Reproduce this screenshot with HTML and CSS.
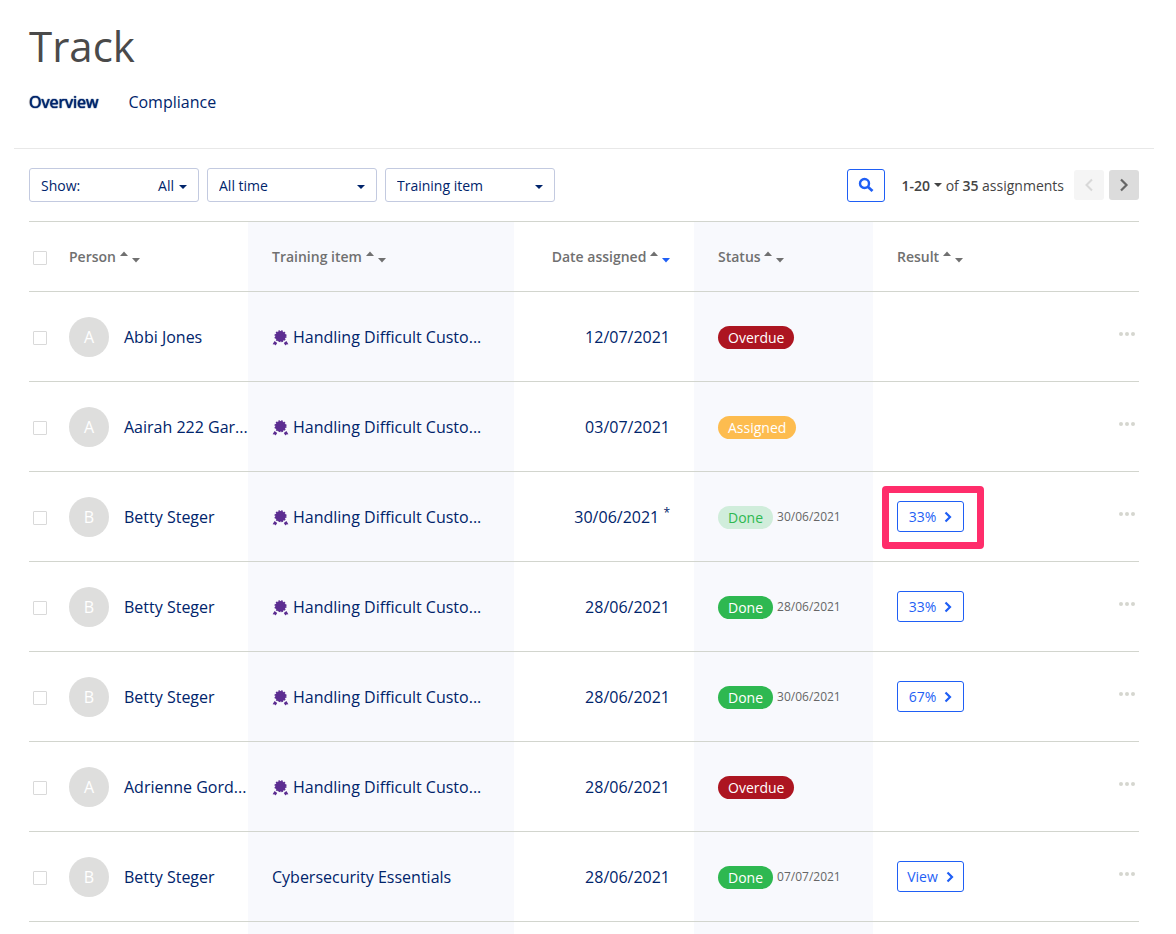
FILE: index.html
```html
<!DOCTYPE html>
<html lang="en">
<head>
  <meta charset="UTF-8" />
  <meta name="viewport" content="width=device-width, initial-scale=1.0"/>
  <title>Track</title>
  <link rel="stylesheet" href="styles.css">
</head>
<body>
  <svg class="sprite" aria-hidden="true">
    <symbol id="sort" viewBox="0 0 20 12">
      <path class="up" d="M0 5 L4 0.500 L8 5 Z"/>
      <path class="down" d="M12 7 L20 7 L16 11.500 Z"/>
    </symbol>
    <symbol id="badge" viewBox="0 0 17 16">
      <circle cx="8.500" cy="6.200" r="5.200"/>
      <circle cx="8.500" cy="6.200" r="5.300" fill="none" stroke="currentColor" stroke-width="1.500" stroke-dasharray="1.700 1.075"/>
      <path d="M2.600 11 L5.200 13 L3.600 15.600 L2.700 14.400 L0.600 14.200 Z"/>
      <path d="M14.400 11 L11.800 13 L13.400 15.600 L14.300 14.400 L16.400 14.200 Z"/>
    </symbol>
    <symbol id="chevron" viewBox="0 0 8 12">
      <path d="M1.500 1.500 L6 6 L1.500 10.500" fill="none" stroke="currentColor" stroke-width="2.200"/>
    </symbol>
    <symbol id="dots" viewBox="0 0 16 4">
      <circle cx="2" cy="2" r="2"/><circle cx="8" cy="2" r="2"/><circle cx="14" cy="2" r="2"/>
    </symbol>
  </svg>

  <div class="page">
    <header class="page-header">
      <h1>Track</h1>
      <nav class="tabs">
        <a href="#overview" class="active">Overview</a>
        <a href="#compliance">Compliance</a>
      </nav>
    </header>

    <main class="content">
      <div class="toolbar">
        <div class="filters">
          <div class="filter filter-show">
            <label for="show">Show:</label>
            <select id="show"><option>All</option></select>
          </div>
          <div class="filter">
            <select aria-label="Time"><option>All time</option></select>
          </div>
          <div class="filter">
            <select aria-label="Training item"><option>Training item</option></select>
          </div>
        </div>
        <div class="pager">
          <button class="search" aria-label="Search">
            <svg width="16" height="16" viewBox="0 0 16 16"><circle cx="6.500" cy="6.500" r="4.500" fill="none" stroke="currentColor" stroke-width="2.400"/><path d="M9.800 9.800 L14.500 14" stroke="currentColor" stroke-width="2.800"/></svg>
          </button>
          <div class="count"><button class="range">1-20</button> of <b>35</b> assignments</div>
          <button class="step" aria-label="Previous page" disabled>
            <svg width="10" height="14" viewBox="0 0 10 14"><path d="M8 1.500 L2.500 7 L8 12.500" fill="none" stroke="currentColor" stroke-width="2"/></svg>
          </button>
          <button class="step" aria-label="Next page">
            <svg width="10" height="14" viewBox="0 0 10 14"><path d="M2 1.500 L7.500 7 L2 12.500" fill="none" stroke="currentColor" stroke-width="2.200"/></svg>
          </button>
        </div>
      </div>

      <table>
        <colgroup>
          <col class="col-check"><col class="col-person"><col class="col-item"><col class="col-date"><col class="col-status"><col class="col-result"><col class="col-more">
        </colgroup>
        <thead>
          <tr>
            <th><input type="checkbox" aria-label="Select all"></th>
            <th><button class="sort">Person <svg><use href="#sort"/></svg></button></th>
            <th class="tint"><button class="sort">Training item <svg><use href="#sort"/></svg></button></th>
            <th class="date"><button class="sort sorted">Date assigned <svg><use href="#sort"/></svg></button></th>
            <th class="tint"><button class="sort">Status <svg><use href="#sort"/></svg></button></th>
            <th class="result"><button class="sort">Result <svg><use href="#sort"/></svg></button></th>
            <th></th>
          </tr>
        </thead>
        <tbody>
          <tr>
            <td><input type="checkbox" aria-label="Select Abbi Jones"></td>
            <td><div class="person"><span class="avatar">A</span><a href="#">Abbi Jones</a></div></td>
            <td class="tint"><div class="item"><svg><use href="#badge"/></svg><a href="#">Handling Difficult Custo...</a></div></td>
            <td class="date">12/07/2021</td>
            <td class="tint"><div class="status"><span class="pill overdue">Overdue</span></div></td>
            <td class="result"></td>
            <td class="more"><button aria-label="More"><svg><use href="#dots"/></svg></button></td>
          </tr>
          <tr>
            <td><input type="checkbox" aria-label="Select Aairah 222"></td>
            <td><div class="person"><span class="avatar">A</span><a href="#">Aairah 222 Gar...</a></div></td>
            <td class="tint"><div class="item"><svg><use href="#badge"/></svg><a href="#">Handling Difficult Custo...</a></div></td>
            <td class="date">03/07/2021</td>
            <td class="tint"><div class="status"><span class="pill assigned">Assigned</span></div></td>
            <td class="result"></td>
            <td class="more"><button aria-label="More"><svg><use href="#dots"/></svg></button></td>
          </tr>
          <tr>
            <td><input type="checkbox" aria-label="Select Betty Steger"></td>
            <td><div class="person"><span class="avatar">B</span><a href="#">Betty Steger</a></div></td>
            <td class="tint"><div class="item"><svg><use href="#badge"/></svg><a href="#">Handling Difficult Custo...</a></div></td>
            <td class="date">30/06/2021 <sup>*</sup></td>
            <td class="tint"><div class="status"><span class="pill done-soft">Done</span><span>30/06/2021</span></div></td>
            <td class="result"><div class="highlight"><button class="view">33% <svg><use href="#chevron"/></svg></button></div></td>
            <td class="more"><button aria-label="More"><svg><use href="#dots"/></svg></button></td>
          </tr>
          <tr>
            <td><input type="checkbox" aria-label="Select Betty Steger"></td>
            <td><div class="person"><span class="avatar">B</span><a href="#">Betty Steger</a></div></td>
            <td class="tint"><div class="item"><svg><use href="#badge"/></svg><a href="#">Handling Difficult Custo...</a></div></td>
            <td class="date">28/06/2021</td>
            <td class="tint"><div class="status"><span class="pill done">Done</span><span>28/06/2021</span></div></td>
            <td class="result"><button class="view">33% <svg><use href="#chevron"/></svg></button></td>
            <td class="more"><button aria-label="More"><svg><use href="#dots"/></svg></button></td>
          </tr>
          <tr>
            <td><input type="checkbox" aria-label="Select Betty Steger"></td>
            <td><div class="person"><span class="avatar">B</span><a href="#">Betty Steger</a></div></td>
            <td class="tint"><div class="item"><svg><use href="#badge"/></svg><a href="#">Handling Difficult Custo...</a></div></td>
            <td class="date">28/06/2021</td>
            <td class="tint"><div class="status"><span class="pill done">Done</span><span>30/06/2021</span></div></td>
            <td class="result"><button class="view">67% <svg><use href="#chevron"/></svg></button></td>
            <td class="more"><button aria-label="More"><svg><use href="#dots"/></svg></button></td>
          </tr>
          <tr>
            <td><input type="checkbox" aria-label="Select Adrienne"></td>
            <td><div class="person"><span class="avatar">A</span><a href="#">Adrienne Gord...</a></div></td>
            <td class="tint"><div class="item"><svg><use href="#badge"/></svg><a href="#">Handling Difficult Custo...</a></div></td>
            <td class="date">28/06/2021</td>
            <td class="tint"><div class="status"><span class="pill overdue">Overdue</span></div></td>
            <td class="result"></td>
            <td class="more"><button aria-label="More"><svg><use href="#dots"/></svg></button></td>
          </tr>
          <tr>
            <td><input type="checkbox" aria-label="Select Betty Steger"></td>
            <td><div class="person"><span class="avatar">B</span><a href="#">Betty Steger</a></div></td>
            <td class="tint"><div class="item"><a href="#">Cybersecurity Essentials</a></div></td>
            <td class="date">28/06/2021</td>
            <td class="tint"><div class="status"><span class="pill done">Done</span><span>07/07/2021</span></div></td>
            <td class="result"><button class="view">View <svg><use href="#chevron"/></svg></button></td>
            <td class="more"><button aria-label="More"><svg><use href="#dots"/></svg></button></td>
          </tr>
        </tbody>
        <tfoot>
          <tr><td></td><td></td><td class="tint"></td><td></td><td class="tint"></td><td></td><td></td></tr>
        </tfoot>
      </table>
    </main>
  </div>
</body>
</html>
```

FILE: styles.css
```css
* {
  box-sizing: border-box;
}
body {
  margin: 0;
  font-family: "Open Sans", sans-serif;
  font-size: 16px;
  line-height: 24px;
  color: #00246b;
  background: #fff;
}
button, select {
  font: inherit;
  color: inherit;
  cursor: pointer;
}
a {
  color: inherit;
  text-decoration: none;
}
svg {
  fill: currentColor;
}
.sprite {
  display: none;
}
.page {
  padding: 0 22px 0 14px;
}

/* header */
.page-header {
  padding: 16px 15px 34px;
  border-bottom: 1px solid #e8e8e8;
}
h1 {
  margin: 0;
  font-size: 42px;
  line-height: 60px;
  font-weight: 400;
  color: #4a4a4a;
}
.tabs {
  display: flex;
  gap: 30px;
  margin-top: 14px;
}
/* looks bold without changing the tab's width */
.tabs .active {
  text-shadow: 0 0 1px #00246b, 0 0 1px #00246b;
}

/* toolbar */
.content {
  padding: 0 15px;
}
.toolbar {
  display: flex;
  justify-content: space-between;
  align-items: center;
  padding: 19px 0;
  font-size: 14px;
}
.filters {
  display: flex;
  gap: 8px;
}
.filter {
  position: relative;
  display: flex;
  align-items: center;
  width: 170px;
  height: 34px;
  border: 1px solid #c3cae0;
  border-radius: 3px;
}
.filter::after {
  content: "";
  position: absolute;
  right: 11px;
  top: 16px;
  border: 4px solid transparent;
  border-top-color: #00246b;
  border-bottom: 0;
  pointer-events: none;
}
.filter select {
  flex: 1;
  height: 100%;
  padding: 2px 24px 0 11px;
  border: 0;
  background: none;
  appearance: none;
}
.filter-show label {
  padding: 2px 0 0 11px;
}
.filter-show select {
  padding-left: 0;
  text-align: right;
  text-align-last: right;
}
.pager {
  display: flex;
  align-items: center;
  color: #444;
}
.search {
  display: flex;
  align-items: center;
  justify-content: center;
  width: 38px;
  height: 33px;
  padding: 0;
  border: 1px solid #1f5ff5;
  border-radius: 3px;
  background: #fff;
  color: #1f5ff5;
}
.count {
  margin: 0 10px 0 16px;
  padding-top: 2px;
}
.range {
  padding: 0;
  border: 0;
  background: none;
  font-weight: 600;
}
.range::after {
  content: "";
  display: inline-block;
  margin-left: 4px;
  vertical-align: 4px;
  border: 4px solid transparent;
  border-top-color: #444;
  border-bottom: 0;
}
.count b {
  font-weight: 600;
}
.step {
  display: flex;
  align-items: center;
  justify-content: center;
  width: 30px;
  height: 30px;
  padding: 0;
  border: 0;
  border-radius: 3px;
  background: #dcdcdc;
  color: #666;
}
.step:disabled {
  background: #f5f5f5;
  color: #d8d8d8;
}
.step + .step {
  margin-left: 5px;
}

/* table */
table {
  width: 100%;
  table-layout: fixed;
  border-collapse: separate;
  border-spacing: 0;
  border-top: 1px solid #d2d5ce;
}
.col-check {
  width: 40px;
}
.col-person, .col-status {
  width: 179px;
}
.col-item {
  width: 266px;
}
.col-date {
  width: 180px;
}
.col-more {
  width: 60px;
}
th, td {
  padding: 0;
  border-bottom: 1px solid #d2d5ce;
  text-align: left;
  white-space: nowrap;
}
th {
  height: 70px;
}
td {
  height: 90px;
}
tfoot td {
  height: 12px;
  border: 0;
}
.tint {
  padding-left: 24px;
  background: #f8f9fd;
}
.date {
  padding-right: 24px;
  text-align: right;
}
.date sup {
  font-size: 12px;
  line-height: 0;
}
.result {
  padding-left: 24px;
}
input[type="checkbox"] {
  display: block;
  width: 14px;
  height: 14px;
  margin: 3px 0 0 4px;
  border: 1px solid #d9d9d9;
  border-radius: 1px;
  background: #fff;
  appearance: none;
}
.sort {
  padding: 0;
  border: 0;
  background: none;
  font-size: 14px;
  font-weight: 600;
  color: #707070;
}
.sort svg {
  width: 20px;
  height: 12px;
  vertical-align: -1px;
}
.sorted svg {
  --down: #1f5ff5;
}
.down {
  fill: var(--down, currentColor);
}
.person {
  display: flex;
  align-items: center;
  gap: 15px;
}
.avatar {
  width: 40px;
  height: 40px;
  border-radius: 50%;
  background: #dededd;
  color: #fff;
  line-height: 40px;
  text-align: center;
}
.item {
  display: flex;
  align-items: center;
  gap: 4px;
}
.item svg {
  width: 17px;
  height: 16px;
  margin-top: 2px;
  color: #5c2d91;
}
.status {
  display: flex;
  align-items: center;
  gap: 4px;
  padding-top: 1px;
  font-size: 12px;
  color: #666;
}
.pill {
  padding: 0 10px;
  border-radius: 12px;
  font-size: 14px;
  line-height: 23px;
  color: #fff;
}
.overdue {
  background: #ad1521;
}
.assigned {
  background: #fdbc4f;
}
.done {
  background: #2eb851;
}
.done-soft {
  background: #d0eddb;
  color: #2eb851;
}
.view {
  display: flex;
  align-items: center;
  justify-content: center;
  gap: 8px;
  width: 67px;
  height: 31px;
  padding: 0;
  border: 1px solid #1f5ff5;
  border-radius: 3px;
  background: #fff;
  color: #1f5ff5;
  font-size: 14px;
}
.view svg {
  width: 8px;
  height: 12px;
}
.highlight {
  position: relative;
  width: 67px;
}
.highlight::after {
  content: "";
  position: absolute;
  inset: -15px -20px -17px -15px;
  border: 7px solid #ff2d6b;
  border-radius: 4px;
  pointer-events: none;
}
.more {
  padding: 0 4px 6px 0;
}
.more button {
  display: block;
  margin-left: auto;
  padding: 0;
  border: 0;
  background: none;
  color: #d5d6cf;
}
.more svg {
  display: block;
  width: 16px;
  height: 4px;
}
```
